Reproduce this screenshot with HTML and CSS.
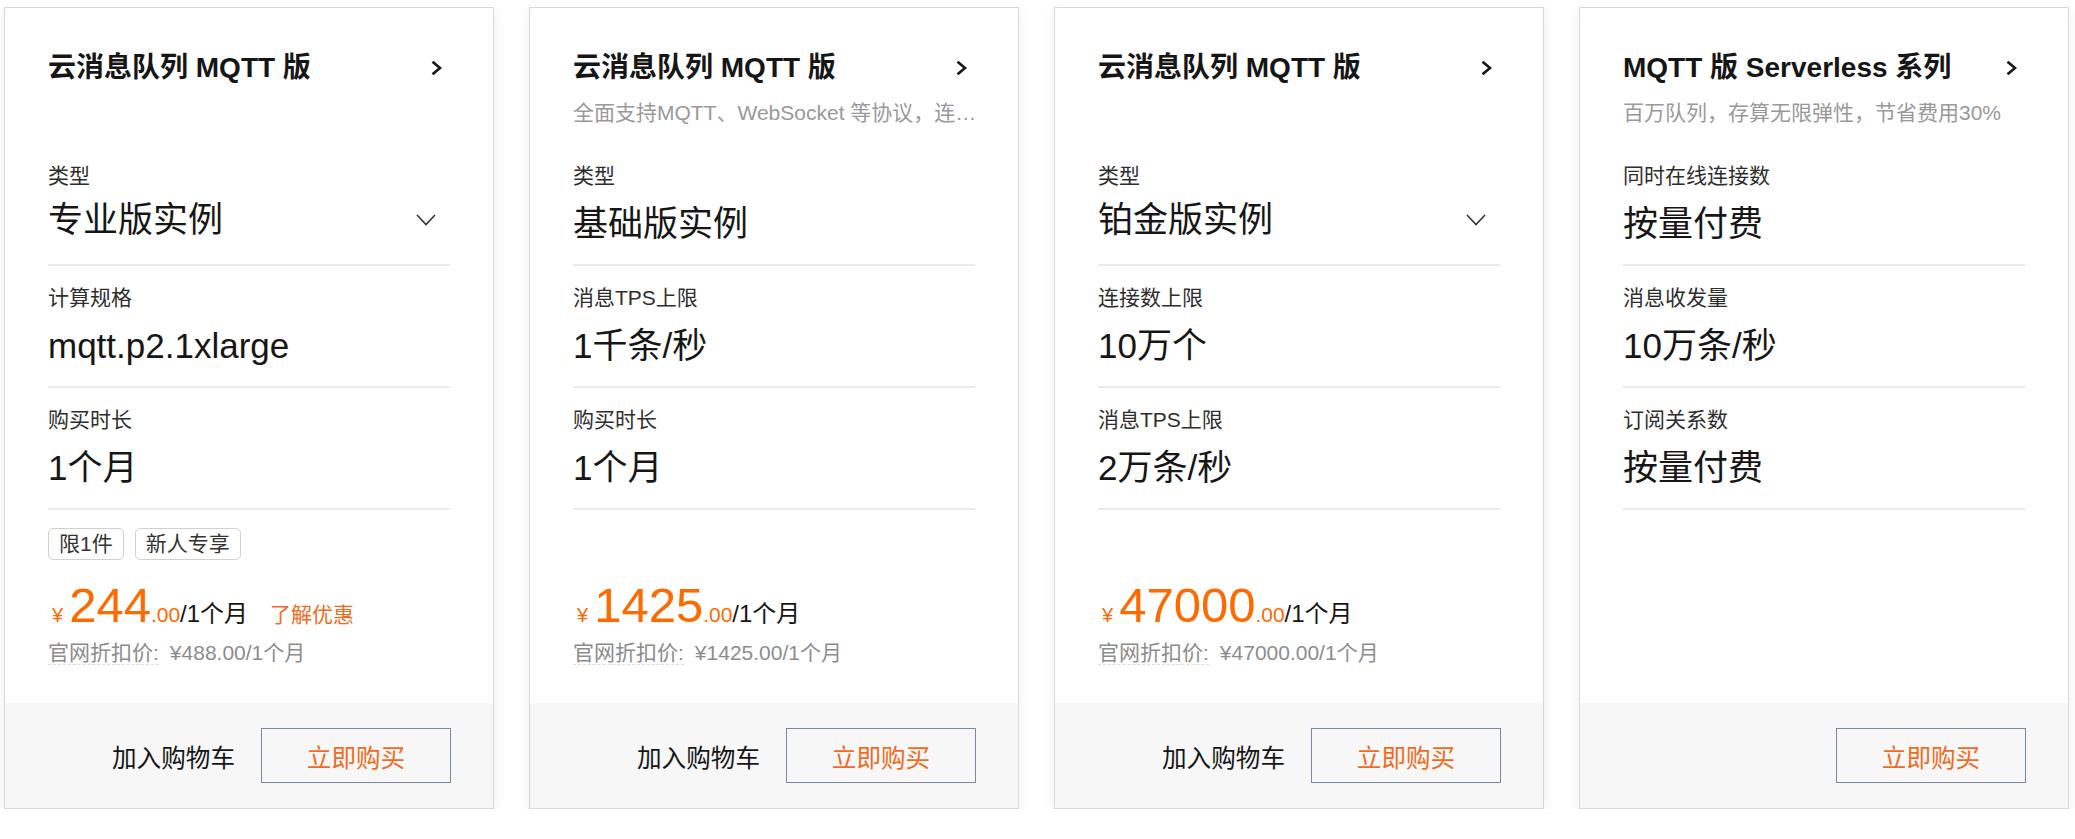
FILE: index.html
```html
<!DOCTYPE html>
<html lang="zh-CN">
<head>
<meta charset="utf-8">
<title>云消息队列 MQTT 版</title>
<link rel="stylesheet" href="styles.css">
</head>
<body>
<div class="page">

  <div class="card">
    <div class="body">
      <div class="head">
        <div class="title-row">
          <span class="title">云消息队列 MQTT 版</span>
          <svg class="arrow" width="12" height="14" viewBox="0 0 12 14"><polyline points="2.5,1.5 9,7 2.5,12.5" fill="none" stroke="#1a1a1a" stroke-width="2.6" stroke-linecap="square" stroke-linejoin="miter"/></svg>
        </div>
      </div>
      <div class="row row-select">
        <div class="label">类型</div>
        <div class="value">专业版实例<svg class="caret" width="20" height="12" viewBox="0 0 20 12"><polyline points="1,1 10,10.5 19,1" fill="none" stroke="#333" stroke-width="1.6"/></svg></div>
      </div>
      <div class="row">
        <div class="label">计算规格</div>
        <div class="value">mqtt.p2.1xlarge</div>
      </div>
      <div class="row">
        <div class="label">购买时长</div>
        <div class="value">1个月</div>
      </div>
      <div class="tags"><span class="tag">限1件</span><span class="tag">新人专享</span></div>
      <div class="price"><span class="cur">¥</span><span class="num">244</span><span class="dec">.00</span><span class="unit">/1个月</span><a class="promo">了解优惠</a></div>
      <div class="orig"><span class="orig-label">官网折扣价:</span><span class="orig-val">¥488.00/1个月</span></div>
    </div>
    <div class="foot"><a class="cart">加入购物车</a><button class="buy">立即购买</button></div>
  </div>

  <div class="card">
    <div class="body">
      <div class="head">
        <div class="title-row">
          <span class="title">云消息队列 MQTT 版</span>
          <svg class="arrow" width="12" height="14" viewBox="0 0 12 14"><polyline points="2.5,1.5 9,7 2.5,12.5" fill="none" stroke="#1a1a1a" stroke-width="2.6" stroke-linecap="square" stroke-linejoin="miter"/></svg>
        </div>
        <div class="sub">全面支持MQTT、WebSocket 等协议，连…</div>
      </div>
      <div class="row">
        <div class="label">类型</div>
        <div class="value">基础版实例</div>
      </div>
      <div class="row">
        <div class="label">消息TPS上限</div>
        <div class="value">1千条/秒</div>
      </div>
      <div class="row">
        <div class="label">购买时长</div>
        <div class="value">1个月</div>
      </div>
      <div class="tags"></div>
      <div class="price"><span class="cur">¥</span><span class="num">1425</span><span class="dec">.00</span><span class="unit">/1个月</span></div>
      <div class="orig"><span class="orig-label">官网折扣价:</span><span class="orig-val">¥1425.00/1个月</span></div>
    </div>
    <div class="foot"><a class="cart">加入购物车</a><button class="buy">立即购买</button></div>
  </div>

  <div class="card">
    <div class="body">
      <div class="head">
        <div class="title-row">
          <span class="title">云消息队列 MQTT 版</span>
          <svg class="arrow" width="12" height="14" viewBox="0 0 12 14"><polyline points="2.5,1.5 9,7 2.5,12.5" fill="none" stroke="#1a1a1a" stroke-width="2.6" stroke-linecap="square" stroke-linejoin="miter"/></svg>
        </div>
      </div>
      <div class="row row-select">
        <div class="label">类型</div>
        <div class="value">铂金版实例<svg class="caret" width="20" height="12" viewBox="0 0 20 12"><polyline points="1,1 10,10.5 19,1" fill="none" stroke="#333" stroke-width="1.6"/></svg></div>
      </div>
      <div class="row">
        <div class="label">连接数上限</div>
        <div class="value">10万个</div>
      </div>
      <div class="row">
        <div class="label">消息TPS上限</div>
        <div class="value">2万条/秒</div>
      </div>
      <div class="tags"></div>
      <div class="price"><span class="cur">¥</span><span class="num">47000</span><span class="dec">.00</span><span class="unit">/1个月</span></div>
      <div class="orig"><span class="orig-label">官网折扣价:</span><span class="orig-val">¥47000.00/1个月</span></div>
    </div>
    <div class="foot"><a class="cart">加入购物车</a><button class="buy">立即购买</button></div>
  </div>

  <div class="card">
    <div class="body">
      <div class="head">
        <div class="title-row">
          <span class="title">MQTT 版 Serverless 系列</span>
          <svg class="arrow" width="12" height="14" viewBox="0 0 12 14"><polyline points="2.5,1.5 9,7 2.5,12.5" fill="none" stroke="#1a1a1a" stroke-width="2.6" stroke-linecap="square" stroke-linejoin="miter"/></svg>
        </div>
        <div class="sub">百万队列，存算无限弹性，节省费用30%</div>
      </div>
      <div class="row">
        <div class="label">同时在线连接数</div>
        <div class="value">按量付费</div>
      </div>
      <div class="row">
        <div class="label">消息收发量</div>
        <div class="value">10万条/秒</div>
      </div>
      <div class="row">
        <div class="label">订阅关系数</div>
        <div class="value">按量付费</div>
      </div>
    </div>
    <div class="foot"><button class="buy">立即购买</button></div>
  </div>

</div>
</body>
</html>
```

FILE: styles.css
```css
* { box-sizing: border-box; }

html, body {
  margin: 0;
  padding: 0;
  background: #ffffff;
}

body {
  font-family: "Liberation Sans", "Noto Sans CJK SC", sans-serif;
  color: #1a1a1a;
}

.page {
  display: flex;
  gap: 35px;
  padding: 7px 0 0 4px;
}

.card {
  width: 490px;
  height: 802px;
  flex: none;
  display: flex;
  flex-direction: column;
  background: #ffffff;
  border: 1px solid #d9d9d9;
  box-shadow: 0 3px 12px rgba(0, 0, 0, 0.07);
}

.body {
  padding: 0 43px;
}

.head {
  height: 136px;
  padding-top: 40px;
}

.title-row {
  display: flex;
  align-items: center;
  justify-content: space-between;
  height: 40px;
}

.title {
  font-size: 28px;
  line-height: 40px;
  font-weight: bold;
  color: #161616;
  white-space: nowrap;
}

.arrow {
  display: block;
  margin-right: 7px;
}

.sub {
  margin-top: 10px;
  font-size: 21px;
  line-height: 30px;
  color: #999999;
  white-space: nowrap;
  overflow: hidden;
}

.row {
  padding: 17px 0 15px;
  border-bottom: 2px solid #ebebeb;
}

.label {
  font-size: 21px;
  line-height: 30px;
  color: #2e2e2e;
  white-space: nowrap;
}

.value {
  margin-top: 8px;
  font-size: 35px;
  line-height: 50px;
  color: #161616;
  white-space: nowrap;
}

.row-select .value {
  display: flex;
  align-items: center;
  justify-content: space-between;
  margin-top: 4px;
  margin-bottom: 4px;
}

.caret {
  display: block;
  margin-right: 14px;
}

.tags {
  display: flex;
  gap: 11px;
  height: 32px;
  margin-top: 18px;
}

.tag {
  height: 32px;
  padding: 0 10px;
  border: 1px solid #d0d0d0;
  border-radius: 5px;
  font-size: 21px;
  line-height: 30px;
  color: #333333;
}

.price {
  margin-top: 17px;
  font-size: 49px;
  line-height: 56px;
  white-space: nowrap;
  color: #ff6a00;
}

.price span, .price a {
  line-height: 1;
}

.cur {
  font-size: 20px;
  margin: 0 6px 0 4px;
}

.num {
  font-size: 49px;
}

.dec {
  font-size: 21px;
}

.unit {
  font-size: 24px;
  color: #161616;
}

.promo {
  font-size: 21px;
  color: #f26b1d;
  margin-left: 22px;
}

.orig {
  margin-top: 5px;
  font-size: 21px;
  line-height: 30px;
  color: #8c8c8c;
  white-space: nowrap;
}

.orig-label {
  border-bottom: 1px dashed #dcdcdc;
}

.orig-val {
  margin-left: 11px;
}

.foot {
  margin-top: auto;
  height: 105px;
  display: flex;
  align-items: center;
  justify-content: flex-end;
  gap: 26px;
  padding: 0 42px;
  background: #f7f7f7;
}

.cart {
  font-size: 24.6px;
  color: #161616;
  white-space: nowrap;
}

.buy {
  width: 190px;
  height: 55px;
  padding: 0;
  background: transparent;
  border: 1px solid #7b8aa3;
  border-radius: 0;
  font-family: "Liberation Sans", "Noto Sans CJK SC", sans-serif;
  font-size: 24.6px;
  color: #f26b1d;
}
```
